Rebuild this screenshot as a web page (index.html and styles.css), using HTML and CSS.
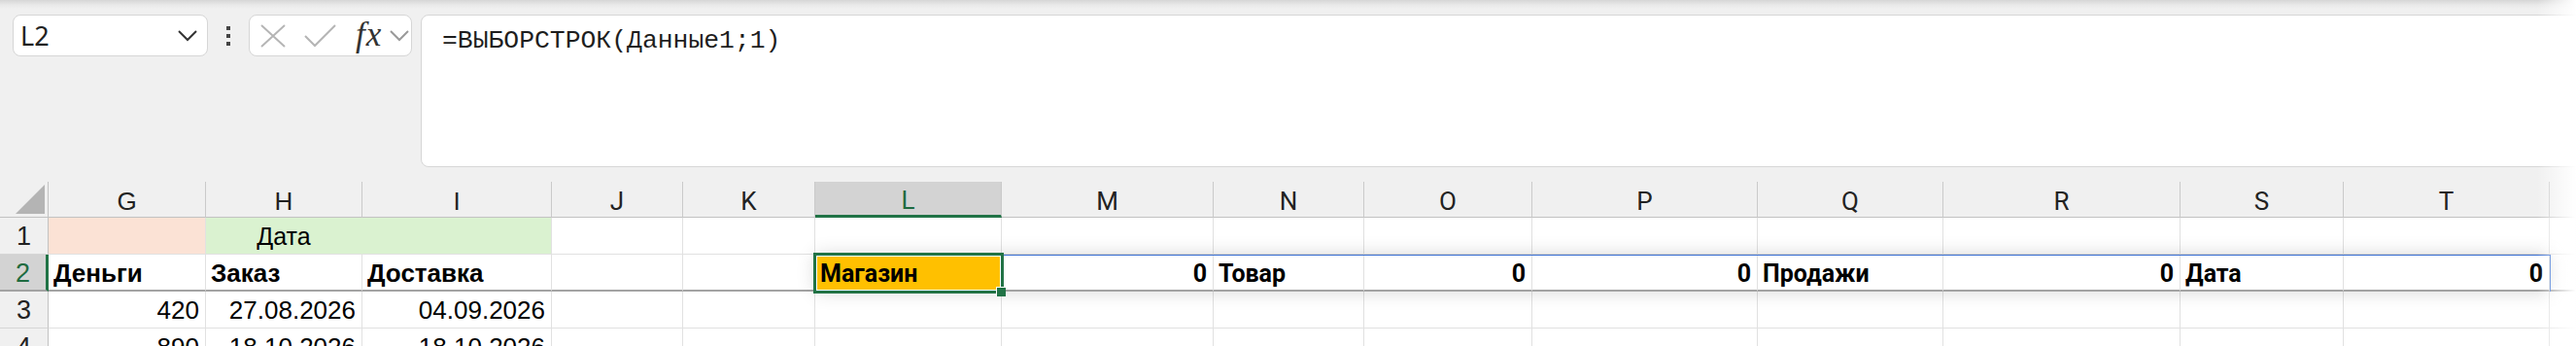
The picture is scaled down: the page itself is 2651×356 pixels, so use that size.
FILE: index.html
```html
<!DOCTYPE html>
<html lang="ru">
<head>
    <meta charset="UTF-8">
    <meta name="viewport" content="width=device-width, initial-scale=1.0">
    <title>Книга1 - Excel</title>
    <link rel="stylesheet" href="styles.css">
</head>
<body>
    <div class="formula-bar">
        <div class="name-box">
            <span class="name-value">L2</span>
            <svg class="chevron" width="20" height="12" viewBox="0 0 20 12"><path d="M1 1 L10 10 L19 1" fill="none" stroke="#333" stroke-width="2"/></svg>
        </div>
        <div class="more-dots"><i></i><i></i><i></i></div>
        <div class="func-box">
            <svg class="icon-cancel" width="26" height="24" viewBox="0 0 26 24"><path d="M1 1 L25 23 M25 1 L1 23" stroke="#b5b5b5" stroke-width="2" fill="none"/></svg>
            <svg class="icon-enter" width="33" height="24" viewBox="0 0 33 24"><path d="M1 12 L11 22 L32 1" stroke="#b5b5b5" stroke-width="2" fill="none"/></svg>
            <span class="fx">fx</span>
            <svg class="chevron" width="20" height="12" viewBox="0 0 20 12"><path d="M1 1 L10 10 L19 1" fill="none" stroke="#9a9a9a" stroke-width="2"/></svg>
        </div>
        <div class="formula-input">=ВЫБОРСТРОК(Данные1;1)</div>
    </div>

    <div class="sheet">
        <!-- column headers -->
        <div class="cell hdr corner"><span class="select-all"></span></div>
        <div class="cell hdr">G</div>
        <div class="cell hdr">H</div>
        <div class="cell hdr">I</div>
        <div class="cell hdr narrow">J</div>
        <div class="cell hdr narrow">K</div>
        <div class="cell hdr narrow active">L</div>
        <div class="cell hdr narrow">M</div>
        <div class="cell hdr narrow">N</div>
        <div class="cell hdr narrow">O</div>
        <div class="cell hdr narrow">P</div>
        <div class="cell hdr narrow">Q</div>
        <div class="cell hdr narrow">R</div>
        <div class="cell hdr narrow">S</div>
        <div class="cell hdr narrow">T</div>
        <div class="cell hdr"></div>

        <!-- row 1 -->
        <div class="cell rowhdr">1</div>
        <div class="cell fill-peach"></div>
        <div class="cell fill-green center">Дата</div>
        <div class="cell fill-green"></div>
        <div class="cell"></div>
        <div class="cell"></div>
        <div class="cell"></div>
        <div class="cell"></div>
        <div class="cell"></div>
        <div class="cell"></div>
        <div class="cell"></div>
        <div class="cell"></div>
        <div class="cell"></div>
        <div class="cell"></div>
        <div class="cell"></div>
        <div class="cell"></div>

        <!-- row 2 -->
        <div class="cell rowhdr active frozen">2</div>
        <div class="cell frozen b">Деньги</div>
        <div class="cell frozen b">Заказ</div>
        <div class="cell frozen b">Доставка</div>
        <div class="cell frozen"></div>
        <div class="cell frozen"></div>
        <div class="cell frozen b narrow fill-orange">Магазин</div>
        <div class="cell frozen b narrow num">0</div>
        <div class="cell frozen b narrow">Товар</div>
        <div class="cell frozen b narrow num">0</div>
        <div class="cell frozen b narrow num">0</div>
        <div class="cell frozen b narrow">Продажи</div>
        <div class="cell frozen b narrow num">0</div>
        <div class="cell frozen b narrow">Дата</div>
        <div class="cell frozen b narrow num">0</div>
        <div class="cell frozen"></div>

        <!-- row 3 -->
        <div class="cell rowhdr">3</div>
        <div class="cell num">420</div>
        <div class="cell num">27.08.2026</div>
        <div class="cell num">04.09.2026</div>
        <div class="cell"></div>
        <div class="cell"></div>
        <div class="cell"></div>
        <div class="cell"></div>
        <div class="cell"></div>
        <div class="cell"></div>
        <div class="cell"></div>
        <div class="cell"></div>
        <div class="cell"></div>
        <div class="cell"></div>
        <div class="cell"></div>
        <div class="cell"></div>

        <!-- row 4 -->
        <div class="cell rowhdr">4</div>
        <div class="cell num">890</div>
        <div class="cell num">18.10.2026</div>
        <div class="cell num">18.10.2026</div>
        <div class="cell"></div>
        <div class="cell"></div>
        <div class="cell"></div>
        <div class="cell"></div>
        <div class="cell"></div>
        <div class="cell"></div>
        <div class="cell"></div>
        <div class="cell"></div>
        <div class="cell"></div>
        <div class="cell"></div>
        <div class="cell"></div>
        <div class="cell"></div>

        <!-- spill range + active cell overlays -->
        <div class="spill-range"></div>
        <div class="active-cell"></div>
        <div class="fill-handle"></div>
    </div>

    <div class="edge-fade"></div>
</body>
</html>
```

FILE: styles.css
```css
body {
    margin: 0;
    padding: 0;
    width: 2651px;
    height: 356px;
    overflow: hidden;
    position: relative;
    background: #f0f0f0;
    font-family: 'Liberation Sans', Arial, sans-serif;
    color: #000;
}

/* formula bar */
.formula-bar {
    display: flex;
    align-items: flex-start;
    height: 172px;
    box-sizing: border-box;
    padding: 15px 0 0 13px;
    background: linear-gradient(to bottom, #d6d6d6 0, #e9e9e9 5px, #f0f0f0 9px);
}
.name-box, .func-box {
    display: flex;
    align-items: center;
    height: 43px;
    box-sizing: border-box;
    background: #fff;
    border: 1px solid #d6d6d6;
    border-radius: 8px;
}
.name-box {
    width: 201px;
    padding: 0 10px 0 7px;
    justify-content: space-between;
}
.name-value {
    font-family: 'Noto Sans', sans-serif;
    font-size: 27px;
    color: #222;
}
.more-dots {
    display: flex;
    flex-direction: column;
    gap: 4px;
    margin: 12px 19px 0 19px;
}
.more-dots i {
    display: block;
    width: 4px;
    height: 4px;
    background: #444;
}
.func-box {
    width: 168px;
    padding-left: 11px;
}
.icon-cancel { margin-right: 19px; }
.icon-enter { margin-right: 20px; }
.fx {
    font-family: 'Liberation Serif', serif;
    font-style: italic;
    font-size: 35px;
    letter-spacing: 1px;
    color: #333;
    margin-top: -2px;
    margin-right: 8px;
}
.formula-input {
    flex: 1;
    height: 157px;
    margin-left: 9px;
    margin-right: -20px;
    box-sizing: border-box;
    padding: 9px 0 0 21px;
    background: #fff;
    border: 1px solid #d6d6d6;
    border-radius: 8px;
    font-family: 'Liberation Mono', monospace;
    font-size: 26.4px;
    line-height: 34px;
    color: #1e1e1e;
}

/* sheet grid */
.sheet {
    position: relative;
    margin-top: 15px;
    display: grid;
    grid-template-columns: 50px 162px 161px 195px 135px 136px 192px 218px 155px 173px 232px 191px 244px 168px 212px 1fr;
    grid-auto-rows: 38px;
    grid-template-rows: 37px;
    background: #fff;
}
.cell {
    box-sizing: border-box;
    display: flex;
    align-items: center;
    padding: 2px 5px 0 5px;
    border-right: 1px solid #e1e1e1;
    border-bottom: 1px solid #e1e1e1;
    font-size: 26px;
    white-space: nowrap;
    overflow: visible;
}
.hdr {
    background: #f0f0f0;
    justify-content: center;
    border-right-color: #cacaca;
    border-bottom-color: #c2c2c2;
    color: #222;
    padding-top: 4px;
}
.corner {
    position: relative;
    border-right-color: #c2c2c2;
}
.select-all {
    position: absolute;
    right: 3px;
    bottom: 3px;
    width: 30px;
    height: 30px;
    background: #b4b4b4;
    clip-path: polygon(100% 0, 100% 100%, 0 100%);
}
.rowhdr {
    background: #f0f0f0;
    justify-content: center;
    border-right-color: #c2c2c2;
    border-bottom-color: #d6d6d6;
    color: #222;
    font-size: 27px;
}
.hdr.active {
    background: #d3d3d3;
    color: #1e6b40;
    border-bottom: 3px solid #217346;
}
.rowhdr.active {
    background: #d3d3d3;
    color: #1e6b40;
    border-right: 3px solid #217346;
}
.narrow { font-family: Roboto, sans-serif; }
.b { font-weight: bold; }
.b.narrow { font-size: 25px; }
.num { justify-content: flex-end; padding-right: 6px; }
.center { justify-content: center; font-size: 25px; }
.frozen { border-bottom: 2px solid #a3a3a3; }

.fill-peach { background: #fbe2d5; }
.fill-green { background: #daf2d0; border-right-color: #daf2d0; }
.fill-green + .fill-green { border-right-color: #e1e1e1; }
.fill-orange { background: #ffc000; }

/* overlays */
.spill-range {
    position: absolute;
    left: 839px;
    top: 75px;
    width: 1786px;
    height: 38px;
    box-sizing: border-box;
    border-top: 1px solid #3a6fd2;
    border-right: 1px solid #3a6fd2;
    box-shadow: 0 0 20px rgba(0, 0, 0, 0.16);
}
.active-cell {
    position: absolute;
    left: 837px;
    top: 73px;
    width: 196px;
    height: 42px;
    box-sizing: border-box;
    border: 3px solid #217346;
    box-shadow: inset 0 0 0 1px #fff;
}
.fill-handle {
    position: absolute;
    left: 1025px;
    top: 108px;
    width: 9px;
    height: 9px;
    background: #217346;
    border-left: 1px solid #fff;
    border-top: 1px solid #fff;
}
.edge-fade {
    position: absolute;
    top: 0;
    right: 0;
    width: 40px;
    height: 356px;
    background: linear-gradient(to right, rgba(255, 255, 255, 0), #fff);
}
```
